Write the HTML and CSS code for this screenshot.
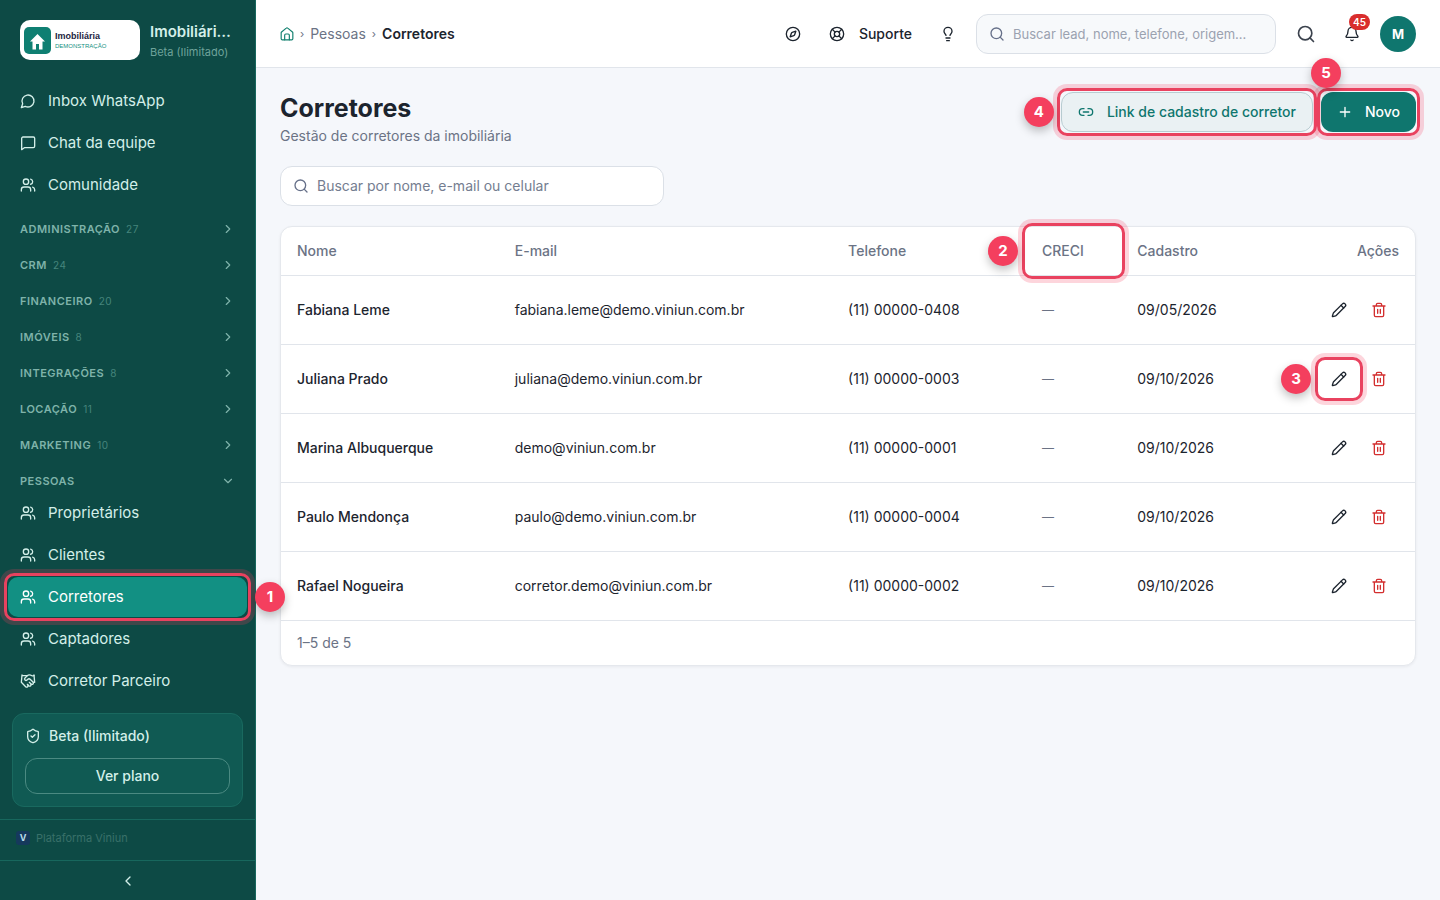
FILE: index.html
```html
<!DOCTYPE html>
<html lang="pt-BR">
<head>
  <meta charset="UTF-8">
  <meta name="viewport" content="width=device-width, initial-scale=1">
  <title>Corretores</title>
  <link rel="stylesheet" href="styles.css">
</head>
<body>
  <!-- Icon set -->
  <svg class="sprite" aria-hidden="true">
    <symbol id="i-circle-chat" viewBox="0 0 24 24"><path d="M7.9 20A9 9 0 1 0 4 16.1L2 22Z"/></symbol>
    <symbol id="i-chat" viewBox="0 0 24 24"><path d="M22 17a2 2 0 0 1-2 2H6.500L2.500 22V5a2 2 0 0 1 2-2H20a2 2 0 0 1 2 2z"/></symbol>
    <symbol id="i-users" viewBox="0 0 24 24"><path d="M16 21v-2a4 4 0 0 0-4-4H6a4 4 0 0 0-4 4v2"/><circle cx="9" cy="7" r="4"/><path d="M22 21v-2a4 4 0 0 0-3-3.870M16 3.130a4 4 0 0 1 0 7.750"/></symbol>
    <symbol id="i-handshake" viewBox="0 0 24 24"><path d="m11 17 2 2a1 1 0 1 0 3-3"/><path d="m14 14 2.500 2.500a1 1 0 1 0 3-3l-3.880-3.880a3 3 0 0 0-4.240 0l-.88.880a1 1 0 1 1-3-3l2.810-2.810a5.790 5.790 0 0 1 7.060-.87l.47.280a2 2 0 0 0 1.420.250L21 4"/><path d="m21 3 1 11h-2M3 3 2 14l6.500 6.500a1 1 0 1 0 3-3M3 4h8"/></symbol>
    <symbol id="i-right" viewBox="0 0 24 24"><path d="m9 18 6-6-6-6"/></symbol>
    <symbol id="i-left" viewBox="0 0 24 24"><path d="m15 18-6-6 6-6"/></symbol>
    <symbol id="i-down" viewBox="0 0 24 24"><path d="m6 9 6 6 6-6"/></symbol>
    <symbol id="i-shield" viewBox="0 0 24 24"><path d="M20 13c0 5-3.500 7.500-7.660 8.950a1 1 0 0 1-.67-.01C7.500 20.500 4 18 4 13V6a1 1 0 0 1 1-1c2 0 4.500-1.200 6.240-2.720a1.170 1.170 0 0 1 1.520 0C14.510 3.810 17 5 19 5a1 1 0 0 1 1 1z"/><path d="m9 12 2 2 4-4"/></symbol>
    <symbol id="i-home" viewBox="0 0 24 24"><path d="M2 10a2 2 0 0 1 .7-1.500l8-6.500a2 2 0 0 1 2.600 0l8 6.500A2 2 0 0 1 22 10v10a2 2 0 0 1-2 2H4a2 2 0 0 1-2-2z"/><path d="M8 22v-8a2 2 0 0 1 2-2h4a2 2 0 0 1 2 2v8"/></symbol>
    <symbol id="i-compass" viewBox="0 0 24 24"><circle cx="12" cy="12" r="10"/><path d="m16.240 7.760-1.800 5.410a2 2 0 0 1-1.270 1.270l-5.410 1.800 1.800-5.410a2 2 0 0 1 1.270-1.270z"/></symbol>
    <symbol id="i-buoy" viewBox="0 0 24 24"><circle cx="12" cy="12" r="10"/><circle cx="12" cy="12" r="4"/><path d="m4.930 4.930 4.240 4.240M14.830 9.170l4.240-4.240M14.830 14.830l4.240 4.240M9.170 14.830l-4.240 4.240"/></symbol>
    <symbol id="i-bulb" viewBox="0 0 24 24"><path d="M15 14c.2-1 .7-1.700 1.500-2.500 1-.9 1.500-2.200 1.500-3.500A6 6 0 0 0 6 8c0 1 .2 2.200 1.500 3.500.7.700 1.300 1.500 1.500 2.500"/><path d="M9 18h6M10 22h4"/></symbol>
    <symbol id="i-search" viewBox="0 0 24 24"><circle cx="11" cy="11" r="8"/><path d="m21 21-4.300-4.300"/></symbol>
    <symbol id="i-bell" viewBox="0 0 24 24"><path d="M10.270 21a2 2 0 0 0 3.460 0"/><path d="M3.260 15.330A1 1 0 0 0 4 17h16a1 1 0 0 0 .74-1.670C19.410 13.960 18 12.500 18 8A6 6 0 0 0 6 8c0 4.500-1.410 5.960-2.740 7.330"/></symbol>
    <symbol id="i-link" viewBox="0 0 24 24"><path d="M9 17H7A5 5 0 0 1 7 7h2M15 7h2a5 5 0 1 1 0 10h-2M8 12h8"/></symbol>
    <symbol id="i-plus" viewBox="0 0 24 24"><path d="M5 12h14M12 5v14"/></symbol>
    <symbol id="i-pencil" viewBox="0 0 24 24"><path d="M21.170 6.810a1 1 0 0 0-3.980-3.990L3.840 16.170a2 2 0 0 0-.5.830l-1.320 4.350a.5.500 0 0 0 .62.620l4.350-1.320a2 2 0 0 0 .83-.5z"/><path d="m15 5 4 4"/></symbol>
    <symbol id="i-trash" viewBox="0 0 24 24"><path d="M3 6h18M19 6v14a2 2 0 0 1-2 2H7a2 2 0 0 1-2-2V6M8 6V4a2 2 0 0 1 2-2h4a2 2 0 0 1 2 2v2M10 11v6M14 11v6"/></symbol>
  </svg>

  <div class="app">
    <!-- Sidebar -->
    <aside class="sidebar">
      <div class="brand">
        <div class="brand-logo">
          <svg class="brand-mark" viewBox="0 0 27 27" aria-hidden="true">
            <rect width="27" height="27" rx="5" fill="#0f7f72"/>
            <path d="M13.500 7 21 14.500h-2.500V22.500h-3.500V17h-3v5.500H8.500v-8H6z" fill="#fff"/>
          </svg>
          <div class="brand-logo-text">
            <strong>Imobiliária</strong>
            <span>DEMONSTRAÇÃO</span>
          </div>
        </div>
        <div class="brand-info">
          <div class="brand-name">Imobiliária Demonstração</div>
          <div class="brand-plan">Beta (Ilimitado)</div>
        </div>
      </div>

      <nav class="nav">
        <div class="nav-list">
          <a href="#" class="nav-item"><svg class="icon"><use href="#i-circle-chat"/></svg>Inbox WhatsApp</a>
          <a href="#" class="nav-item"><svg class="icon"><use href="#i-chat"/></svg>Chat da equipe</a>
          <a href="#" class="nav-item"><svg class="icon"><use href="#i-users"/></svg>Comunidade</a>
        </div>

        <button type="button" class="nav-group">Administração <small>27</small><svg class="icon icon-chevron"><use href="#i-right"/></svg></button>
        <button type="button" class="nav-group">CRM <small>24</small><svg class="icon icon-chevron"><use href="#i-right"/></svg></button>
        <button type="button" class="nav-group">Financeiro <small>20</small><svg class="icon icon-chevron"><use href="#i-right"/></svg></button>
        <button type="button" class="nav-group">Imóveis <small>8</small><svg class="icon icon-chevron"><use href="#i-right"/></svg></button>
        <button type="button" class="nav-group">Integrações <small>8</small><svg class="icon icon-chevron"><use href="#i-right"/></svg></button>
        <button type="button" class="nav-group">Locação <small>11</small><svg class="icon icon-chevron"><use href="#i-right"/></svg></button>
        <button type="button" class="nav-group">Marketing <small>10</small><svg class="icon icon-chevron"><use href="#i-right"/></svg></button>
        <button type="button" class="nav-group">Pessoas<svg class="icon icon-chevron"><use href="#i-down"/></svg></button>

        <div class="nav-list">
          <a href="#" class="nav-item"><svg class="icon"><use href="#i-users"/></svg>Proprietários</a>
          <a href="#" class="nav-item"><svg class="icon"><use href="#i-users"/></svg>Clientes</a>
          <a href="#" class="nav-item active callout" aria-current="page"><svg class="icon"><use href="#i-users"/></svg>Corretores<span class="step step-right">1</span></a>
          <a href="#" class="nav-item"><svg class="icon"><use href="#i-users"/></svg>Captadores</a>
          <a href="#" class="nav-item"><svg class="icon"><use href="#i-handshake"/></svg>Corretor Parceiro</a>
        </div>
      </nav>

      <div class="plan-card">
        <div class="plan-name"><svg class="icon"><use href="#i-shield"/></svg>Beta (Ilimitado)</div>
        <button type="button" class="plan-btn">Ver plano</button>
      </div>

      <div class="platform"><span class="platform-logo">V</span>Plataforma Viniun</div>
      <button type="button" class="collapse" aria-label="Recolher menu"><svg class="icon"><use href="#i-left"/></svg></button>
    </aside>

    <div class="content">
      <!-- Top bar -->
      <header class="topbar">
        <nav class="breadcrumb" aria-label="Trilha">
          <a href="#" class="crumb-home" aria-label="Início"><svg class="icon"><use href="#i-home"/></svg></a>
          <span class="crumb-sep">›</span>
          <a href="#">Pessoas</a>
          <span class="crumb-sep">›</span>
          <strong>Corretores</strong>
        </nav>

        <div class="topbar-tools">
          <div class="topbar-links">
            <button type="button" class="tool-btn" aria-label="Explorar"><svg class="icon"><use href="#i-compass"/></svg></button>
            <button type="button" class="tool-btn tool-support"><svg class="icon"><use href="#i-buoy"/></svg>Suporte</button>
            <button type="button" class="tool-btn" aria-label="Dicas"><svg class="icon"><use href="#i-bulb"/></svg></button>
          </div>
          <label class="field field-global">
            <svg class="icon"><use href="#i-search"/></svg>
            <input type="search" aria-label="Busca global" placeholder="Buscar lead, nome, telefone, origem...">
          </label>
          <button type="button" class="tool-btn tool-search" aria-label="Buscar"><svg class="icon"><use href="#i-search"/></svg></button>
          <button type="button" class="tool-btn" aria-label="Notificações"><svg class="icon"><use href="#i-bell"/></svg><span class="count">45</span></button>
          <button type="button" class="avatar">M</button>
        </div>
      </header>

      <main class="main">
        <div class="page-header">
          <div>
            <h1>Corretores</h1>
            <p>Gestão de corretores da imobiliária</p>
          </div>
          <div class="page-actions">
            <button type="button" class="btn btn-outline callout"><svg class="icon"><use href="#i-link"/></svg>Link de cadastro de corretor<span class="step step-left">4</span></button>
            <button type="button" class="btn btn-primary callout"><svg class="icon"><use href="#i-plus"/></svg>Novo<span class="step step-top">5</span></button>
          </div>
        </div>

        <label class="field field-list">
          <svg class="icon"><use href="#i-search"/></svg>
          <input type="search" aria-label="Buscar corretor" placeholder="Buscar por nome, e-mail ou celular">
        </label>

        <!-- Brokers table -->
        <div class="card">
          <table class="table">
            <thead>
              <tr>
                <th class="col-name">Nome</th>
                <th class="col-email">E-mail</th>
                <th class="col-phone">Telefone</th>
                <th class="col-creci callout">CRECI<span class="step step-left">2</span></th>
                <th>Cadastro</th>
                <th class="col-actions">Ações</th>
              </tr>
            </thead>
            <tbody>
              <tr>
                <td class="name">Fabiana Leme</td>
                <td>fabiana.leme@demo.viniun.com.br</td>
                <td>(11) 00000-0408</td>
                <td class="empty">—</td>
                <td>09/05/2026</td>
                <td>
                  <div class="row-actions">
                    <button type="button" class="row-btn" aria-label="Editar"><svg class="icon"><use href="#i-pencil"/></svg></button>
                    <button type="button" class="row-btn row-btn-delete" aria-label="Excluir"><svg class="icon"><use href="#i-trash"/></svg></button>
                  </div>
                </td>
              </tr>
              <tr>
                <td class="name">Juliana Prado</td>
                <td>juliana@demo.viniun.com.br</td>
                <td>(11) 00000-0003</td>
                <td class="empty">—</td>
                <td>09/10/2026</td>
                <td>
                  <div class="row-actions">
                    <button type="button" class="row-btn callout" aria-label="Editar"><svg class="icon"><use href="#i-pencil"/></svg><span class="step step-left">3</span></button>
                    <button type="button" class="row-btn row-btn-delete" aria-label="Excluir"><svg class="icon"><use href="#i-trash"/></svg></button>
                  </div>
                </td>
              </tr>
              <tr>
                <td class="name">Marina Albuquerque</td>
                <td>demo@viniun.com.br</td>
                <td>(11) 00000-0001</td>
                <td class="empty">—</td>
                <td>09/10/2026</td>
                <td>
                  <div class="row-actions">
                    <button type="button" class="row-btn" aria-label="Editar"><svg class="icon"><use href="#i-pencil"/></svg></button>
                    <button type="button" class="row-btn row-btn-delete" aria-label="Excluir"><svg class="icon"><use href="#i-trash"/></svg></button>
                  </div>
                </td>
              </tr>
              <tr>
                <td class="name">Paulo Mendonça</td>
                <td>paulo@demo.viniun.com.br</td>
                <td>(11) 00000-0004</td>
                <td class="empty">—</td>
                <td>09/10/2026</td>
                <td>
                  <div class="row-actions">
                    <button type="button" class="row-btn" aria-label="Editar"><svg class="icon"><use href="#i-pencil"/></svg></button>
                    <button type="button" class="row-btn row-btn-delete" aria-label="Excluir"><svg class="icon"><use href="#i-trash"/></svg></button>
                  </div>
                </td>
              </tr>
              <tr>
                <td class="name">Rafael Nogueira</td>
                <td>corretor.demo@viniun.com.br</td>
                <td>(11) 00000-0002</td>
                <td class="empty">—</td>
                <td>09/10/2026</td>
                <td>
                  <div class="row-actions">
                    <button type="button" class="row-btn" aria-label="Editar"><svg class="icon"><use href="#i-pencil"/></svg></button>
                    <button type="button" class="row-btn row-btn-delete" aria-label="Excluir"><svg class="icon"><use href="#i-trash"/></svg></button>
                  </div>
                </td>
              </tr>
            </tbody>
          </table>
          <div class="card-footer">1–5 de 5</div>
        </div>
      </main>
    </div>
  </div>
</body>
</html>
```
FILE: styles.css
```css
/* --- Reset --- */
* {
  margin: 0;
  padding: 0;
  box-sizing: border-box;
}

body {
  font-family: Inter, "Open Sans", sans-serif;
  font-size: 14px;
  line-height: 20px;
  color: #1c242e;
  background-color: #f5f7fb;
}

a {
  color: inherit;
  text-decoration: none;
}

button,
input {
  font: inherit;
  color: inherit;
  background: none;
  border: none;
}

button {
  cursor: pointer;
}

.sprite {
  display: none;
}

.icon {
  width: 16px;
  height: 16px;
  flex-shrink: 0;
  fill: none;
  stroke: currentColor;
  stroke-width: 2;
  stroke-linecap: round;
  stroke-linejoin: round;
}

.app {
  display: flex;
  min-height: 100vh;
}

/* --- Sidebar --- */
.sidebar {
  position: relative;
  z-index: 2;
  flex: 0 0 256px;
  min-width: 0;
  display: flex;
  flex-direction: column;
  color: #d3efe9;
  background-color: #0d4a45;
  border-right: 1px solid #17675d;
}

.brand {
  display: flex;
  align-items: center;
  gap: 10px;
  padding: 20px;
}

.brand-logo {
  flex: 0 0 120px;
  height: 40px;
  display: flex;
  align-items: center;
  gap: 4px;
  padding: 4px;
  background-color: #fff;
  border-radius: 10px;
}

.brand-mark {
  width: 27px;
  height: 27px;
}

.brand-logo-text {
  display: flex;
  flex-direction: column;
  font-family: "Liberation Sans", sans-serif;
}

.brand-logo-text strong {
  font-size: 9px;
  line-height: 11px;
  color: #1b2340;
}

.brand-logo-text span {
  font-size: 6px;
  line-height: 8px;
  color: #12907f;
}

.brand-info {
  min-width: 0;
}

.brand-name {
  overflow: hidden;
  font-size: 15px;
  font-weight: 600;
  line-height: 24px;
  white-space: nowrap;
  text-overflow: ellipsis;
}

.brand-plan {
  font-size: 11px;
  line-height: 16px;
  white-space: nowrap;
  color: #6fa39b;
}

.nav {
  flex: 1;
  padding: 1px 8px 0;
}

.nav-list {
  display: flex;
  flex-direction: column;
  gap: 2px;
}

.nav-item {
  display: flex;
  align-items: center;
  gap: 12px;
  height: 40px;
  padding: 0 12px;
  font-size: 15px;
  border-radius: 10px;
}

.nav-item.active {
  color: #fff;
  background-color: #129083;
}

.nav-group {
  display: flex;
  align-items: center;
  gap: 6px;
  width: 100%;
  height: 24px;
  margin-top: 12px;
  padding: 0 12px;
  font-size: 11px;
  font-weight: 600;
  letter-spacing: 0.5px;
  text-transform: uppercase;
  color: #7fb3aa;
}

.nav-group small {
  font-size: 10px;
  font-weight: 400;
  color: #45857c;
}

.icon-chevron {
  width: 14px;
  height: 14px;
  margin-left: auto;
}

.plan-card {
  display: flex;
  flex-direction: column;
  gap: 12px;
  margin: 12px;
  padding: 12px;
  background-color: #105a53;
  border: 1px solid #19695f;
  border-radius: 12px;
}

.plan-name {
  display: flex;
  align-items: center;
  gap: 8px;
  font-weight: 500;
}

.plan-btn {
  height: 36px;
  font-weight: 500;
  border: 1px solid #4b8a82;
  border-radius: 12px;
}

.platform {
  display: flex;
  align-items: center;
  gap: 6px;
  height: 41px;
  padding: 0 16px 4px;
  font-size: 11px;
  color: #397069;
  border-top: 1px solid #17675d;
}

.platform-logo {
  width: 14px;
  height: 14px;
  font-size: 9px;
  font-weight: 700;
  line-height: 14px;
  text-align: center;
  color: #b9dcea;
  background-color: #15395c;
  border-radius: 3px;
}

.collapse {
  display: flex;
  align-items: center;
  justify-content: center;
  height: 40px;
  border-top: 1px solid #17675d;
}

/* --- Top bar --- */
.content {
  flex: 1;
  min-width: 0;
}

.topbar {
  display: flex;
  align-items: center;
  justify-content: space-between;
  height: 68px;
  padding: 0 24px;
  background-color: #fff;
  border-bottom: 1px solid #e1e5eb;
}

.breadcrumb {
  display: flex;
  align-items: center;
  gap: 6px;
  color: #6b7385;
}

.breadcrumb strong {
  font-weight: 600;
  color: #1c242e;
}

.crumb-home {
  display: flex;
  color: #12806f;
}

.crumb-home .icon {
  width: 14px;
  height: 14px;
}

.crumb-sep {
  font-size: 11px;
}

.topbar-tools {
  display: flex;
  align-items: center;
  gap: 10px;
}

.topbar-links {
  display: flex;
  gap: 8px;
}

.tool-btn {
  position: relative;
  display: flex;
  align-items: center;
  justify-content: center;
  width: 36px;
  height: 36px;
}

.tool-support {
  gap: 14px;
  width: auto;
  padding: 0 10px;
  font-weight: 500;
}

.tool-search {
  color: #3b424d;
}

.tool-search .icon {
  width: 20px;
  height: 20px;
}

.count {
  position: absolute;
  top: -2px;
  right: 0;
  min-width: 21px;
  height: 16px;
  font-size: 10px;
  font-weight: 600;
  line-height: 16px;
  text-align: center;
  color: #fff;
  background-color: #d92d2d;
  border-radius: 8px;
}

.avatar {
  width: 36px;
  height: 36px;
  font-size: 13px;
  font-weight: 700;
  color: #fff;
  background-color: #0f766e;
  border-radius: 50%;
}

.field {
  display: flex;
  align-items: center;
  gap: 8px;
  height: 40px;
  padding: 0 12px;
  color: #667089;
  border: 1px solid #dbe0e7;
  border-radius: 12px;
}

.field input {
  flex: 1;
  min-width: 0;
  outline: none;
  text-overflow: ellipsis;
}

.field input::placeholder {
  color: #747d90;
}

.field-global {
  width: 300px;
  margin-right: 2px;
  background-color: #f7f9fb;
}

.field-global input {
  font-size: 13px;
}

.field-global input::placeholder {
  color: #9ba2b0;
}

.field-list {
  max-width: 384px;
  background-color: #fff;
}

/* --- Page --- */
.main {
  display: flex;
  flex-direction: column;
  gap: 20px;
  padding: 24px;
}

.page-header {
  display: flex;
  align-items: flex-start;
  justify-content: space-between;
}

.page-header h1 {
  font-size: 25px;
  font-weight: 700;
  line-height: 32px;
}

.page-header p {
  margin-top: 2px;
  color: #6b7385;
}

.page-actions {
  display: flex;
  gap: 8px;
}

.btn {
  display: flex;
  align-items: center;
  gap: 12px;
  height: 40px;
  padding: 0 16px;
  font-weight: 500;
  border-radius: 12px;
}

.btn-outline {
  gap: 13px;
  color: #0f766e;
  background-color: #eaf1f3;
  border: 1px solid #b9cdd2;
}

.btn-primary {
  color: #fff;
  background-color: #0f766e;
}

/* --- Table --- */
.card {
  background-color: #fff;
  border: 1px solid #e5e8ed;
  border-radius: 12px;
  box-shadow: 0 1px 3px rgba(16, 24, 40, 0.06);
}

.table {
  width: 100%;
  table-layout: fixed;
  border-collapse: separate;
  border-spacing: 0;
}

.table th,
.table td {
  padding: 0 16px;
  text-align: left;
  white-space: nowrap;
  border-bottom: 1px solid #e1e5eb;
}

.table th {
  height: 49px;
  font-weight: 500;
  color: #6b7385;
}

.table td {
  height: 69px;
}

.table .name {
  font-weight: 500;
}

.table .empty {
  font-size: 12px;
  color: #6b7385;
}

.col-name {
  width: 19.2%;
}

.col-email {
  width: 29.4%;
}

.col-phone {
  width: 17.1%;
}

.col-creci {
  width: 8.4%;
}

.table .col-actions {
  text-align: right;
}

.row-actions {
  display: flex;
  justify-content: flex-end;
}

.row-btn {
  display: flex;
  align-items: center;
  justify-content: center;
  width: 40px;
  height: 36px;
}

.row-btn-delete {
  color: #d32f2f;
}

.card-footer {
  padding: 12px 16px;
  color: #6b7385;
}

/* --- Guide callouts --- */
.callout {
  position: relative;
}

.callout::after {
  content: "";
  position: absolute;
  inset: -4px;
  border: 3px solid #e9425f;
  border-radius: 10px;
  box-shadow: 0 0 0 4px rgba(244, 63, 94, 0.22);
  pointer-events: none;
}

.btn-outline.callout::after {
  inset: -5px;
}

.step {
  position: absolute;
  z-index: 1;
  width: 30px;
  height: 30px;
  font-size: 15px;
  font-weight: 700;
  line-height: 30px;
  text-align: center;
  color: #fff;
  background-color: #f43f5e;
  border-radius: 50%;
  box-shadow: 0 4px 10px rgba(0, 0, 0, 0.25);
}

.step-left {
  top: calc(50% - 15px);
  right: calc(100% + 8px);
}

.step-right {
  top: calc(50% - 15px);
  left: calc(100% + 8px);
}

.step-top {
  bottom: calc(100% + 4px);
  left: -10px;
}
```
